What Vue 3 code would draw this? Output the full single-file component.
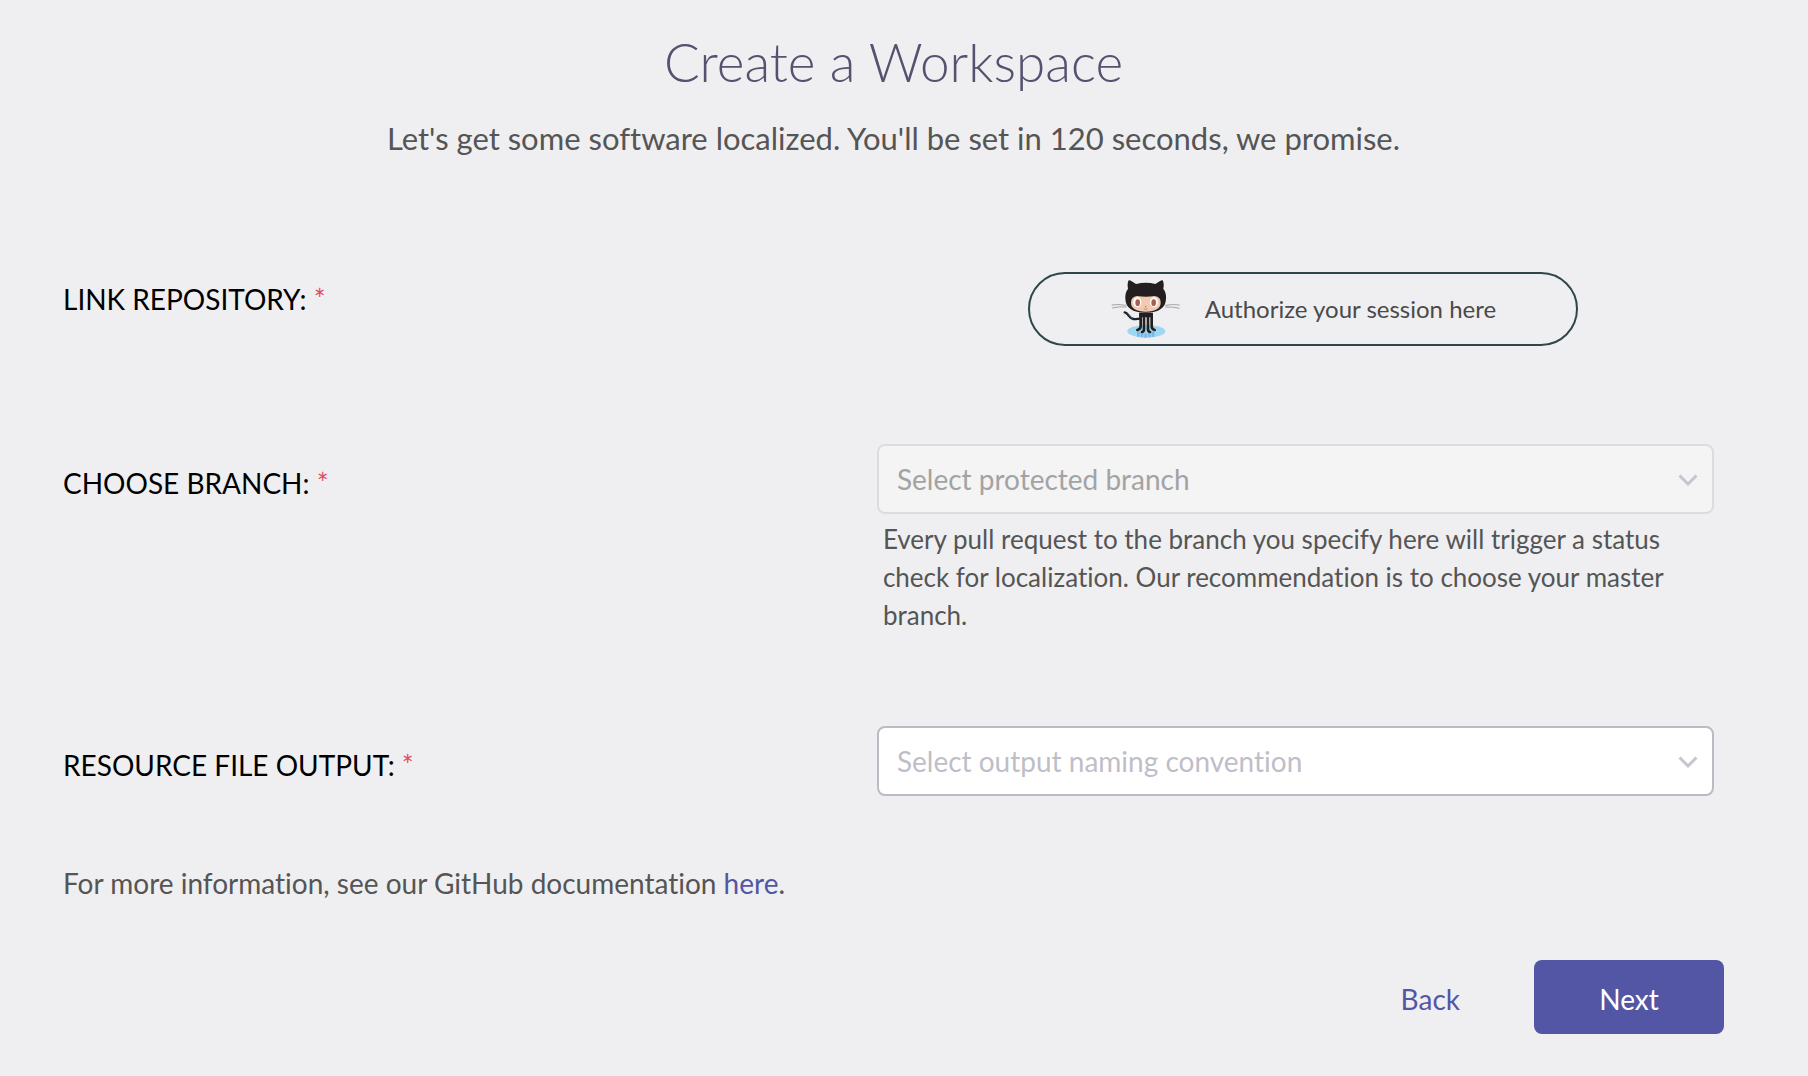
<script setup>
import { ref } from 'vue'

const branch = ref('')
const output = ref('')
</script>

<template>
  <main class="page">
    <header class="intro">
      <h1>Create a Workspace</h1>
      <p>Let's get some software localized. You'll be set in 120 seconds, we promise.</p>
    </header>

    <form class="form" @submit.prevent>
      <div class="row row-link">
        <label for="authorize">LINK REPOSITORY: <span class="required">*</span></label>
        <div class="field field-center">
          <button id="authorize" type="button" class="authorize">
            <svg class="octocat" viewBox="54 42 210 180" aria-hidden="true">
              <ellipse cx="160" cy="199" rx="57" ry="19" fill="#9ed8f0" />
              <path d="M136 199v16M147 203v14M158 205v13M169 203v14M180 199v16" stroke="#7db6ea" stroke-width="8" />
              <path d="M95 142c12 2 12 18 26 20 8 1 13-1 20-1" fill="none" stroke="#231f20" stroke-width="7" stroke-linecap="round" />
              <path d="M93 144c0 5 1 8 3 10" fill="none" stroke="#9ed8f0" stroke-width="2" />
              <path d="M104 145c6 4 6 12 15 16" fill="none" stroke="#4f7f8c" stroke-width="2" />
              <path d="M138 143h42l-1 14H139z" fill="#231f20" />
              <path d="M143 150v34q0 9-10 11M153 152v40q0 8-6 9M165 152v40q0 8 6 9M176 150v34q0 9 9 11" fill="none" stroke="#231f20" stroke-width="8" stroke-linecap="round" />
              <path d="M107 46q3-3 22 11 30-7 58 0 19-14 22-11 5 9 2 26 9 10 8 29-1 41-61 42-60-1-61-42-1-19 8-29-3-17 2-26z" fill="#231f20" />
              <path d="M132 93q26 4 53 0 18 2 18 20 0 26-45 27-44-1-44-27 0-18 18-20z" fill="#f0cbb1" />
              <ellipse cx="133" cy="112" rx="12" ry="15" fill="#fff" />
              <ellipse cx="183" cy="112" rx="12" ry="15" fill="#fff" />
              <ellipse cx="134" cy="113" rx="7" ry="10" fill="#ad5c51" />
              <ellipse cx="182" cy="113" rx="7" ry="10" fill="#ad5c51" />
              <circle cx="158" cy="125" r="2" fill="#ad5c51" />
              <path d="M152 131q6 5 12 0" fill="none" stroke="#ad5c51" stroke-width="2" />
              <path d="M56 120q22-3 44 1M57 129q22-5 44-3M217 121q22-4 43-1M217 126q22-1 43 4" fill="none" stroke="#a5a3a5" stroke-width="3" />
            </svg>
            <span>Authorize your session here</span>
          </button>
        </div>
      </div>

      <div class="row">
        <label for="branch">CHOOSE BRANCH: <span class="required">*</span></label>
        <div class="field">
          <div class="select">
            <select id="branch" v-model="branch" disabled aria-describedby="branch-help">
              <option value="" disabled>Select protected branch</option>
            </select>
            <svg class="chevron" viewBox="0 0 20 14" aria-hidden="true"><path d="M1.5 1.5l8.5 8.5 8.5-8.5" /></svg>
          </div>
          <p id="branch-help" class="help">
            Every pull request to the branch you specify here will trigger a status check for
            localization. Our recommendation is to choose your master branch.
          </p>
        </div>
      </div>

      <div class="row">
        <label for="output">RESOURCE FILE OUTPUT: <span class="required">*</span></label>
        <div class="field">
          <div class="select">
            <select id="output" v-model="output">
              <option value="" disabled>Select output naming convention</option>
            </select>
            <svg class="chevron" viewBox="0 0 20 14" aria-hidden="true"><path d="M1.5 1.5l8.5 8.5 8.5-8.5" /></svg>
          </div>
        </div>
      </div>

      <p class="info">For more information, see our GitHub documentation <a href="#">here</a>.</p>

      <div class="actions">
        <button type="button" class="back">Back</button>
        <button type="submit" class="next">Next</button>
      </div>
    </form>
  </main>
</template>

<style>
body {
  margin: 0;
  background: #efeff1;
}
</style>

<style scoped>
.page {
  box-sizing: border-box;
  min-height: 100vh;
  padding: 30px 84px 40px 63px;
  font-family: Lato, "Open Sans", sans-serif;
  font-size: 28px;
  line-height: 34px;
  font-variant-ligatures: none;
  color: #555;
}

.intro {
  text-align: center;
}

h1 {
  margin: 0 0 25px;
  font-size: 53px;
  font-weight: 300;
  line-height: 64px;
  color: #55516f;
}

.intro p {
  margin: 0;
  font-size: 31px;
  line-height: 38px;
}

.form {
  margin-top: 115px;
}

.row {
  display: flex;
  align-items: flex-start;
  margin-bottom: 92px;
}

.row label {
  flex: 1;
  padding-top: 22px;
  color: #000;
}

.row-link {
  margin-bottom: 98px;
}

.row-link label {
  padding-top: 10px;
}

.required {
  color: #e04f5f;
}

.field {
  box-sizing: border-box;
  width: 51%;
  padding-right: 10px;
}

.field-center {
  display: flex;
  justify-content: center;
  padding: 0 0 0 6px;
}

button,
select {
  font: inherit;
  cursor: pointer;
}

.authorize {
  display: flex;
  align-items: center;
  justify-content: center;
  gap: 24px;
  box-sizing: border-box;
  width: 550px;
  height: 74px;
  padding: 0;
  border: 2px solid #2f4749;
  border-radius: 37px;
  background: transparent;
  font-size: 24px;
  color: #4a4a4a;
}

.octocat {
  width: 70px;
  height: 60px;
}

.select {
  position: relative;
}

select {
  display: block;
  appearance: none;
  box-sizing: border-box;
  width: 100%;
  height: 70px;
  padding: 0 48px 0 18px;
  border: 2px solid #bcbbc5;
  border-radius: 8px;
  background: #fff;
  color: #bfbec8;
}

select:disabled {
  border-color: #dcdcdd;
  background: #f4f4f4;
  color: #a3a3a3;
  opacity: 1;
  cursor: default;
}

.chevron {
  position: absolute;
  top: 50%;
  right: 16px;
  width: 20px;
  height: 14px;
  margin-top: -5px;
  fill: none;
  stroke: #c6c5d0;
  stroke-width: 3;
  pointer-events: none;
}

.help {
  margin: 6px 0 0;
  padding-left: 6px;
  font-size: 26px;
  line-height: 38px;
}

.info {
  margin: -22px 0 0;
}

a {
  color: #5356a5;
  text-decoration: none;
}

.actions {
  display: flex;
  justify-content: flex-end;
  gap: 32px;
  margin-top: 60px;
}

.back,
.next {
  height: 74px;
  padding: 4px 42px 0;
  border: 0;
  border-radius: 8px;
}

.back {
  background: transparent;
  color: #5356a5;
}

.next {
  width: 190px;
  background: #5356a5;
  color: #fff;
}
</style>
